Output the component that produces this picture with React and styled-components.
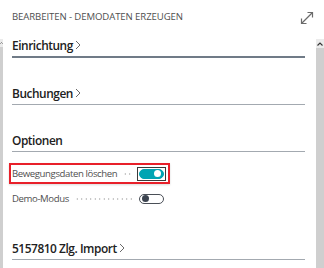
import React from 'react';
import styled, { createGlobalStyle } from 'styled-components';

const GlobalStyle = createGlobalStyle`
  html, body {
    margin: 0;
    padding: 0;
    background: #ffffff;
  }
  body {
    font-family: "Open Sans", "Noto Sans", sans-serif;
  }
`;

const Dialog = styled.div`
  width: 324px;
  height: 268px;
  display: flex;
  flex-direction: column;
  background: #ffffff;
  overflow: hidden;
`;

const Header = styled.div`
  height: 38px;
  display: flex;
  align-items: center;
  justify-content: space-between;
  padding: 0 9px 0 12px;
  box-sizing: border-box;
  flex: none;
`;

const HeaderTitle = styled.div`
  font-size: 9.6px;
  color: #4f4f4f;
  letter-spacing: -0.1px;
  margin-top: -5px;
`;

const ExpandButton = styled.div`
  width: 16px;
  height: 16px;
  margin-top: -3px;
  display: flex;
`;

const Body = styled.div`
  flex: 1;
  display: flex;
  min-height: 0;
`;

const EdgeBar = styled.div`
  width: ${props => props.width}px;
  flex: none;
  display: flex;
  flex-direction: column;
  margin-top: 1px;
`;

const EdgeButton = styled.div`
  height: ${props => props.height}px;
  background: #ebebeb;
  display: flex;
  align-items: center;
  justify-content: center;
  overflow: hidden;
`;

const EdgeTrack = styled.div`
  flex: 1;
  background: #cfcfcf;
`;

const Content = styled.div`
  flex: 1;
  padding: 0 11px 0 9px;
  display: flex;
  flex-direction: column;
`;

const Section = styled.div`
  margin-top: ${props => props.gap || 0}px;
`;

const SectionTitle = styled.div`
  display: flex;
  align-items: center;
  gap: 2px;
  font-size: 11.9px;
  font-weight: 600;
  letter-spacing: -0.45px;
  line-height: 14px;
  color: #212121;
  padding-bottom: 4px;
  border-bottom: ${props => props.focused ? '2px solid #707b87' : '1.5px solid #a3a9b0'};
`;

const Fields = styled.div`
  display: flex;
  flex-direction: column;
  gap: 4px;
  margin-top: 11px;
`;

const FieldRow = styled.div`
  width: 154px;
  height: 17px;
  display: flex;
  align-items: center;
  border: 2px solid ${props => props.highlighted ? '#e8202a' : 'transparent'};
  margin-left: -3px;
  padding: 0 2px 0 1px;
  box-shadow: ${props => props.highlighted ? '0 1px 2px rgba(0,0,0,0.15)' : 'none'};
`;

const FieldLabel = styled.span`
  font-size: 9.6px;
  letter-spacing: -0.4px;
  color: #505050;
  flex: none;
`;

const Leader = styled.span`
  flex: 1;
  height: 2px;
  margin: 1px 5px 0 6px;
  background-image: radial-gradient(circle, #b4b4b4 0.7px, transparent 0.9px);
  background-size: 4.5px 2px;
  background-repeat: repeat-x;
`;

const ToggleFocus = styled.span`
  display: flex;
  padding: 1px;
  border: 1px solid ${props => props.focused ? '#3a3a3a' : 'transparent'};
`;

const Toggle = styled.span`
  width: 25px;
  height: 10px;
  border-radius: 6px;
  box-sizing: border-box;
  display: flex;
  align-items: center;
  justify-content: ${props => props.on ? 'flex-end' : 'flex-start'};
  padding: 0 2px;
  background: ${props => props.on ? '#00a4b3' : '#ffffff'};
  border: 1px solid ${props => props.on ? '#00a4b3' : '#4a4f57'};
`;

const Knob = styled.span`
  width: 7px;
  height: 7px;
  border-radius: 50%;
  background: ${props => props.on ? '#ffffff' : '#3c4450'};
`;

const Chevron = () => (
  <svg width="6" height="10" viewBox="0 0 6 10">
    <polyline points="1,1 5,5 1,9" fill="none" stroke="#6a6a6a" strokeWidth="1" />
  </svg>
);

const Caret = () => (
  <svg width="6" height="4" viewBox="0 0 6 4">
    <polyline points="0.5,3.5 3,1 5.5,3.5" fill="none" stroke="#333" strokeWidth="1.1" />
  </svg>
);

const ExpandIcon = () => (
  <svg width="16" height="16" viewBox="0 0 16 16">
    <g fill="none" stroke="#6b6b6b" strokeWidth="1.2">
      <line x1="2.5" y1="13.5" x2="13.5" y2="2.5" />
      <polyline points="8.5,2.5 13.5,2.5 13.5,7.5" />
      <polyline points="2.5,8.5 2.5,13.5 7.5,13.5" />
    </g>
  </svg>
);

const Field = ({ label, on, highlighted }) => (
  <FieldRow highlighted={highlighted}>
    <FieldLabel>{label}</FieldLabel>
    <Leader />
    <ToggleFocus focused={highlighted}>
      <Toggle on={on}>
        <Knob on={on} />
      </Toggle>
    </ToggleFocus>
  </FieldRow>
);

const App = () => (
  <Dialog>
    <GlobalStyle />
    <Header>
      <HeaderTitle>BEARBEITEN - DEMODATEN ERZEUGEN</HeaderTitle>
      <ExpandButton><ExpandIcon /></ExpandButton>
    </Header>
    <Body>
      <EdgeBar width={3}>
        <EdgeButton height={8}><Caret /></EdgeButton>
        <EdgeTrack />
      </EdgeBar>
      <Content>
        <Section>
          <SectionTitle focused>Einrichtung<Chevron /></SectionTitle>
        </Section>
        <Section gap={28}>
          <SectionTitle>Buchungen<Chevron /></SectionTitle>
        </Section>
        <Section gap={28}>
          <SectionTitle>Optionen</SectionTitle>
          <Fields>
            <Field label="Bewegungsdaten löschen" on highlighted />
            <Field label="Demo-Modus" />
          </Fields>
        </Section>
        <Section gap={32}>
          <SectionTitle>5157810 Zlg. Import<Chevron /></SectionTitle>
        </Section>
      </Content>
      <EdgeBar width={8}>
        <EdgeButton height={9}><Caret /></EdgeButton>
        <EdgeTrack />
      </EdgeBar>
    </Body>
  </Dialog>
);

export default App;
